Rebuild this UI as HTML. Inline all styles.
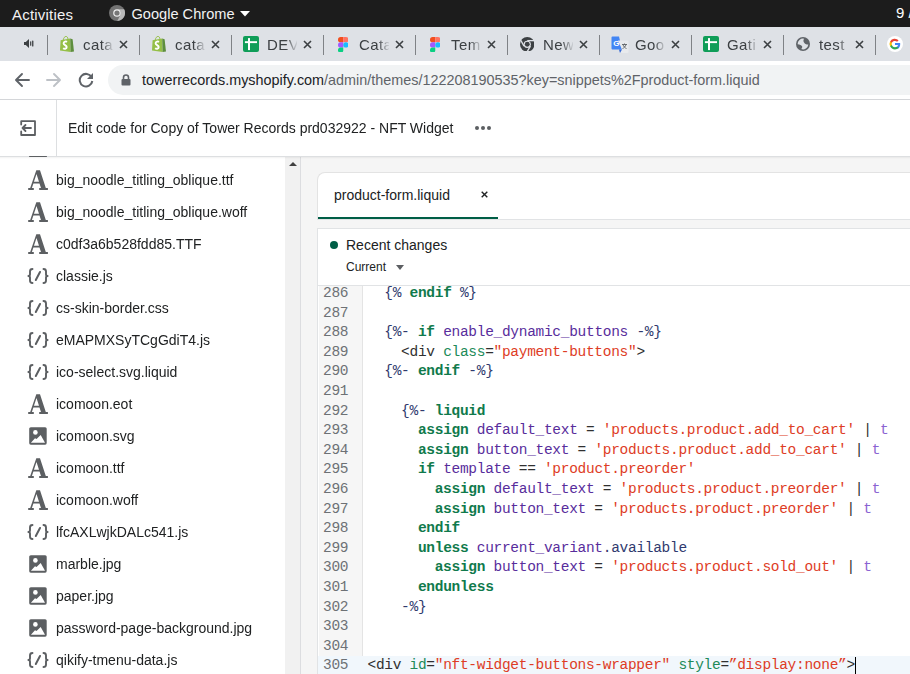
<!DOCTYPE html>
<html><head><meta charset="utf-8">
<style>
*{box-sizing:border-box;margin:0;padding:0}
html,body{width:910px;height:674px;overflow:hidden;background:#fff;font-family:"Liberation Sans",sans-serif}
.abs{position:absolute}
#topbar{left:0;top:0;width:910px;height:27px;background:#1c1c1c;color:#fff}
#tabs{left:0;top:27px;width:910px;height:34px;background:#dee1e6}
#toolbar{left:0;top:61px;width:910px;height:39px;background:#fff;border-bottom:1px solid #d4d6d9}
#omni{left:108px;top:65px;width:820px;height:30px;border-radius:15px;background:#f1f3f4}
#shead{left:0;top:100px;width:910px;height:57px;background:#fff;border-bottom:1px solid #dddfe1}
#sidebar{left:0;top:157px;width:285px;height:517px;background:#fff;overflow:hidden;will-change:transform}
#scroll{left:285px;top:157px;width:16px;height:517px;background:#f1f1f1;border-right:1px solid #dcdde0}
#main{left:301px;top:157px;width:609px;height:517px;background:#f5f5f5}
.tabt{font-size:15px;letter-spacing:0.4px;color:#3c4043;white-space:nowrap;width:30px;height:20px;overflow:hidden;-webkit-mask-image:linear-gradient(90deg,#000 62%,rgba(0,0,0,0.1) 100%)}
.sbt{font-size:14px;color:#202223;white-space:nowrap}
.item{position:absolute;left:0;height:32px;width:285px;font-size:14px;color:#202223}
.item span{position:absolute;left:56px;top:15px;line-height:0}
.sep{position:absolute;top:34.5px;width:1px;height:20px;background:#7f8286}
.tab{position:absolute;top:27px;height:34px;width:92px}
.tab .t{position:absolute;left:36px;top:8px;font-size:15px;color:#45484c;white-space:nowrap;width:33px;overflow:hidden}
.tab .x{position:absolute;left:71px;top:12px;width:10px;height:10px}
.code{font-family:"Liberation Mono",monospace;font-size:14.5px;letter-spacing:-0.3px;line-height:19.6px;white-space:pre}
.ln{position:absolute;left:318px;width:45px;height:19.6px;color:#6d7175;padding-left:5px}
.cl{position:absolute;left:367.5px;height:19.6px;color:#303030}
.k{color:#107a4c;font-weight:bold}
.d{color:#303a6e}
.v{color:#582d9c}
.s{color:#de3c25}
.f{color:#8a63d2}
.a{color:#218a58}
</style></head><body>
<!-- Ubuntu top bar -->
<div id="topbar" class="abs">
  <div class="abs" style="left:12px;top:5.5px;font-size:15px;letter-spacing:0.2px;color:#f2f2f2">Activities</div>
  <svg class="abs" style="left:109px;top:5px" width="16" height="16" viewBox="0 0 16 16"><circle cx="8" cy="8" r="8" fill="#737373"/><path d="M8 4.2H15.1A8 8 0 0 1 8.3 16L11.3 9.9A3.8 3.8 0 0 0 8 4.2Z" fill="#b8b8b8"/><circle cx="8" cy="8" r="3.8" fill="#f0f0f0"/><circle cx="8" cy="8" r="2.6" fill="#777"/></svg>
  <div class="abs" style="left:131.5px;top:5.5px;font-size:14.6px;color:#f2f2f2;white-space:nowrap">Google Chrome</div>
  <svg class="abs" style="left:240px;top:11px" width="10" height="5.5"><path d="M0 0H10L5 5.5Z" fill="#fff"/></svg>
  <div class="abs" style="left:896px;top:4px;font-size:15px;white-space:nowrap">9 /</div>
</div>
<!-- tab strip -->
<div id="tabs" class="abs"></div>
<svg class="abs" style="left:23px;top:38px" width="11" height="11" viewBox="0 0 11 11"><path d="M1 4H2.8L6 1V10L2.8 7H1Z" fill="#3c4043"/><rect x="7.1" y="3.2" width="1.2" height="4.6" rx=".6" fill="#3c4043"/><rect x="9.1" y="2.5" width="1.3" height="6" rx=".6" fill="#3c4043"/></svg>
<div class="sep" style="left:47px"></div>
<div class="abs" style="left:60.0px;top:36.0px;width:14px;height:16px;line-height:0"><svg width="14" height="16" viewBox="0 0 14 16"><path d="M0.6 4.3L10.2 2.4 10.6 16 0 14.6Z" fill="#95bf47"/><path d="M10.2 2.4L12.6 3.2 14 15.6 10.6 16Z" fill="#5e8e3e"/><path d="M3.2 4C3.6 1.8 4.8 0.4 6 0.4 7.2 0.4 7.8 1.6 8 3.2" stroke="#95bf47" stroke-width="1" fill="none"/><path d="M7 5.9C6.1 5.3 3.6 5.2 3.6 7.3 3.6 9.2 6.7 9 6.7 11.1 6.7 13.1 4.2 13 3.1 12.3" stroke="#fff" stroke-width="1.9" fill="none"/></svg></div>
<div class="abs tabt" style="left:83px;top:35.5px">cata</div>
<svg class="abs" style="left:119px;top:40px" width="9" height="9" viewBox="0 0 9 9"><path d="M1 1l7 7M8 1l-7 7" stroke="#3c4043" stroke-width="1.6"/></svg>
<div class="sep" style="left:139px"></div>
<div class="abs" style="left:152.0px;top:36.0px;width:14px;height:16px;line-height:0"><svg width="14" height="16" viewBox="0 0 14 16"><path d="M0.6 4.3L10.2 2.4 10.6 16 0 14.6Z" fill="#95bf47"/><path d="M10.2 2.4L12.6 3.2 14 15.6 10.6 16Z" fill="#5e8e3e"/><path d="M3.2 4C3.6 1.8 4.8 0.4 6 0.4 7.2 0.4 7.8 1.6 8 3.2" stroke="#95bf47" stroke-width="1" fill="none"/><path d="M7 5.9C6.1 5.3 3.6 5.2 3.6 7.3 3.6 9.2 6.7 9 6.7 11.1 6.7 13.1 4.2 13 3.1 12.3" stroke="#fff" stroke-width="1.9" fill="none"/></svg></div>
<div class="abs tabt" style="left:175px;top:35.5px">cata</div>
<svg class="abs" style="left:211px;top:40px" width="9" height="9" viewBox="0 0 9 9"><path d="M1 1l7 7M8 1l-7 7" stroke="#3c4043" stroke-width="1.6"/></svg>
<div class="sep" style="left:231px"></div>
<div class="abs" style="left:243.0px;top:36.0px;width:16px;height:16px;line-height:0"><svg width="16" height="16" viewBox="0 0 16 16"><rect x="0" y="0" width="16" height="16" rx="2" fill="#0f9d58"/><rect x="1.9" y="5.2" width="12.1" height="1.9" fill="#fff"/><rect x="5" y="2.1" width="2" height="12" fill="#fff"/></svg></div>
<div class="abs tabt" style="left:267px;top:35.5px">DEV</div>
<svg class="abs" style="left:303px;top:40px" width="9" height="9" viewBox="0 0 9 9"><path d="M1 1l7 7M8 1l-7 7" stroke="#3c4043" stroke-width="1.6"/></svg>
<div class="sep" style="left:323px"></div>
<div class="abs" style="left:337.75px;top:36.625px;width:10.5px;height:15.75px;line-height:0"><svg width="10.5" height="15.75" viewBox="0 0 12 18"><path d="M6 0H3a3 3 0 0 0 0 6h3z" fill="#f24e1e"/><path d="M6 0h3a3 3 0 0 1 0 6H6z" fill="#ff7262"/><path d="M6 6H3a3 3 0 0 0 0 6h3z" fill="#a259ff"/><circle cx="9" cy="9" r="3" fill="#1abcfe"/><path d="M6 12H3a3 3 0 1 0 3 3z" fill="#0acf83"/></svg></div>
<div class="abs tabt" style="left:359px;top:35.5px">Cata</div>
<svg class="abs" style="left:395px;top:40px" width="9" height="9" viewBox="0 0 9 9"><path d="M1 1l7 7M8 1l-7 7" stroke="#3c4043" stroke-width="1.6"/></svg>
<div class="sep" style="left:415px"></div>
<div class="abs" style="left:429.75px;top:36.625px;width:10.5px;height:15.75px;line-height:0"><svg width="10.5" height="15.75" viewBox="0 0 12 18"><path d="M6 0H3a3 3 0 0 0 0 6h3z" fill="#f24e1e"/><path d="M6 0h3a3 3 0 0 1 0 6H6z" fill="#ff7262"/><path d="M6 6H3a3 3 0 0 0 0 6h3z" fill="#a259ff"/><circle cx="9" cy="9" r="3" fill="#1abcfe"/><path d="M6 12H3a3 3 0 1 0 3 3z" fill="#0acf83"/></svg></div>
<div class="abs tabt" style="left:451px;top:35.5px">Tem</div>
<svg class="abs" style="left:487px;top:40px" width="9" height="9" viewBox="0 0 9 9"><path d="M1 1l7 7M8 1l-7 7" stroke="#3c4043" stroke-width="1.6"/></svg>
<div class="sep" style="left:507px"></div>
<div class="abs" style="left:519.75px;top:36.75px;width:14.5px;height:14.5px;line-height:0"><svg width="14.5" height="14.5" viewBox="0 0 16 16"><circle cx="8" cy="8" r="8" fill="#3c4043"/><circle cx="8" cy="8" r="4" fill="#dee1e6"/><circle cx="8" cy="8" r="2.7" fill="#3c4043"/><path d="M8 4H15.5" stroke="#dee1e6" stroke-width="1.5"/><path d="M4.5 10L0.8 3.6" stroke="#dee1e6" stroke-width="1.5"/><path d="M11.5 10L7.7 16.5" stroke="#dee1e6" stroke-width="1.5"/></svg></div>
<div class="abs tabt" style="left:543px;top:35.5px">New</div>
<svg class="abs" style="left:579px;top:40px" width="9" height="9" viewBox="0 0 9 9"><path d="M1 1l7 7M8 1l-7 7" stroke="#3c4043" stroke-width="1.6"/></svg>
<div class="sep" style="left:599px"></div>
<div class="abs" style="left:610.8px;top:35.8px;width:18px;height:18px;line-height:0"><svg width="18" height="18" viewBox="0 0 18 18"><path d="M0.5 1.5A1 1 0 0 1 1.5 .5H8l3 13H1.5a1 1 0 0 1-1-1z" fill="#4285f4"/><path d="M7 4.5h9.5a1 1 0 0 1 1 1V16a1 1 0 0 1-1 1H9l2-3.5z" fill="#e8eaed"/><path d="M8 13.5l3 0-2 3.5z" fill="#3367d6"/><text x="2.3" y="10" font-family="Liberation Sans" font-weight="bold" font-size="8" fill="#fff">G</text><path d="M11 8.5h5M13.5 7.5v1M12 8.5c.5 2 2 3.5 3.5 4M15 8.5c-.5 2-2 3.5-3.5 4" stroke="#5f6368" stroke-width=".9" fill="none"/></svg></div>
<div class="abs tabt" style="left:635px;top:35.5px">Goo</div>
<svg class="abs" style="left:671px;top:40px" width="9" height="9" viewBox="0 0 9 9"><path d="M1 1l7 7M8 1l-7 7" stroke="#3c4043" stroke-width="1.6"/></svg>
<div class="sep" style="left:691px"></div>
<div class="abs" style="left:703.0px;top:36.0px;width:16px;height:16px;line-height:0"><svg width="16" height="16" viewBox="0 0 16 16"><rect x="0" y="0" width="16" height="16" rx="2" fill="#0f9d58"/><rect x="1.9" y="5.2" width="12.1" height="1.9" fill="#fff"/><rect x="5" y="2.1" width="2" height="12" fill="#fff"/></svg></div>
<div class="abs tabt" style="left:727px;top:35.5px">Gati</div>
<svg class="abs" style="left:763px;top:40px" width="9" height="9" viewBox="0 0 9 9"><path d="M1 1l7 7M8 1l-7 7" stroke="#3c4043" stroke-width="1.6"/></svg>
<div class="sep" style="left:783px"></div>
<div class="abs" style="left:796.0px;top:37.0px;width:14px;height:14px;line-height:0"><svg width="14" height="14" viewBox="0 0 16 16"><circle cx="8" cy="8" r="8" fill="#5f6368"/><path d="M1.9 8.3A6.1 6.1 0 0 1 9.2 1.95C8.4 3.2 8.2 4.6 9 5.9 9.8 7.5 11.5 8.6 14.1 8.7A6.1 6.1 0 0 1 6 13.8C7 12.8 7.5 11.6 6.9 10.6 6.2 9.3 4.3 8.6 1.9 8.3Z" fill="#dee1e6"/></svg></div>
<div class="abs tabt" style="left:819px;top:35.5px">test</div>
<svg class="abs" style="left:855px;top:40px" width="9" height="9" viewBox="0 0 9 9"><path d="M1 1l7 7M8 1l-7 7" stroke="#3c4043" stroke-width="1.6"/></svg>
<div class="sep" style="left:875px"></div>
<div class="abs" style="left:887.0px;top:36.0px;width:16px;height:16px;line-height:0"><svg width="16" height="16" viewBox="0 0 16 16"><circle cx="8" cy="8" r="8" fill="#fff"/><path d="M13.2 8.1c0-.4 0-.8-.1-1.1H8v2.1h3a2.6 2.6 0 0 1-1.1 1.7v1.4h1.8c1-1 1.5-2.4 1.5-4.1z" fill="#4285f4"/><path d="M8 13.4c1.5 0 2.8-.5 3.7-1.3l-1.8-1.4c-.5.3-1.1.5-1.9.5-1.4 0-2.6-1-3.1-2.3H3.1v1.4A5.4 5.4 0 0 0 8 13.4z" fill="#34a853"/><path d="M4.9 8.9a3.2 3.2 0 0 1 0-2.1V5.4H3.1a5.4 5.4 0 0 0 0 4.9z" fill="#fbbc05"/><path d="M8 4.9c.8 0 1.5.3 2.1.8l1.5-1.5A5.4 5.4 0 0 0 3.1 5.4l1.8 1.4C5.4 5.5 6.6 4.9 8 4.9z" fill="#ea4335"/></svg></div>
<!-- toolbar -->
<div id="toolbar" class="abs"></div>
<svg class="abs" style="left:14px;top:72px" width="16" height="16" viewBox="0 0 16 16"><path d="M15 8H2.5M8 2L2 8l6 6" stroke="#5f6368" stroke-width="1.9" fill="none" stroke-linecap="round" stroke-linejoin="round"/></svg>
<svg class="abs" style="left:46px;top:72px" width="16" height="16" viewBox="0 0 16 16"><path d="M1 8h12.5M8 2l6 6-6 6" stroke="#bdc1c6" stroke-width="1.9" fill="none" stroke-linecap="round" stroke-linejoin="round"/></svg>
<svg class="abs" style="left:78px;top:72px" width="16" height="16" viewBox="0 0 16 16"><path d="M13.6 5.2A6.3 6.3 0 1 0 14.3 9" stroke="#5f6368" stroke-width="2" fill="none"/><path d="M15 1v6H9z" fill="#5f6368"/></svg>
<div id="omni" class="abs"></div>
<svg class="abs" style="left:121px;top:74px" width="10" height="12" viewBox="0 0 10 12"><path d="M2.5 5V3.5a2.5 2.5 0 0 1 5 0V5" stroke="#5f6368" stroke-width="1.6" fill="none"/><rect x="0.5" y="5" width="9" height="6.5" rx="1" fill="#5f6368"/></svg>
<div class="abs" style="left:142px;top:72px;font-size:14.4px;color:#202124;white-space:nowrap">towerrecords.myshopify.com<span style="color:#5f6368">/admin/themes/122208190535?key=snippets%2Fproduct-form.liquid</span></div>
<!-- shopify header -->
<div id="shead" class="abs"></div>
<div class="abs" style="left:56px;top:100px;width:1px;height:56px;background:#dddfe1"></div>
<svg class="abs" style="left:19px;top:119px" width="18" height="18" viewBox="0 0 18 18"><path d="M2.2 5.5V2.2H16V16H2.2V12.5" stroke="#5c5f62" stroke-width="1.8" fill="none" stroke-linejoin="round" stroke-linecap="round"/><path d="M12 9H3.5M6.5 6L3.5 9 6.5 12" stroke="#5c5f62" stroke-width="1.8" fill="none" stroke-linecap="round" stroke-linejoin="round"/></svg>
<div class="abs" style="left:68px;top:120px;font-size:14px;color:#202223;white-space:nowrap;will-change:transform">Edit code for Copy of Tower Records prd032922 - NFT Widget</div>
<div class="abs" style="left:475px;top:126px;width:18px;height:4px">
  <div class="abs" style="left:0;top:0;width:4px;height:4px;border-radius:2px;background:#5c5f62"></div>
  <div class="abs" style="left:6px;top:0;width:4px;height:4px;border-radius:2px;background:#5c5f62"></div>
  <div class="abs" style="left:12px;top:0;width:4px;height:4px;border-radius:2px;background:#5c5f62"></div>
</div>
<!-- sidebar -->
<div class="abs" style="left:29px;top:155.5px;width:17.5px;height:1.5px;background:#5c5f62;border-radius:1px;z-index:6"></div>
<div class="abs" style="left:0;top:157px;width:910px;height:2px;background:linear-gradient(rgba(0,0,0,.05),rgba(0,0,0,0));z-index:5"></div>
<div id="sidebar" class="abs"><div class="abs" style="left:24px;top:9px;width:28px;height:28px;line-height:0"><svg width="28" height="28" viewBox="0 0 28 28"><path fill-rule="evenodd" d="M12.3 4.2H16L21.8 22H23.9V23.9H15.2V22H17L15.5 17.5H9.4L7.9 22H9.8V23.9H4.2V22H6.2ZM12.5 7.9L15 15.8H9.95Z" fill="#5c5f62"/></svg></div>
<div class="abs sbt" style="left:56px;top:14.5px">big_noodle_titling_oblique.ttf</div>
<div class="abs" style="left:24px;top:41px;width:28px;height:28px;line-height:0"><svg width="28" height="28" viewBox="0 0 28 28"><path fill-rule="evenodd" d="M12.3 4.2H16L21.8 22H23.9V23.9H15.2V22H17L15.5 17.5H9.4L7.9 22H9.8V23.9H4.2V22H6.2ZM12.5 7.9L15 15.8H9.95Z" fill="#5c5f62"/></svg></div>
<div class="abs sbt" style="left:56px;top:46.5px">big_noodle_titling_oblique.woff</div>
<div class="abs" style="left:24px;top:73px;width:28px;height:28px;line-height:0"><svg width="28" height="28" viewBox="0 0 28 28"><path fill-rule="evenodd" d="M12.3 4.2H16L21.8 22H23.9V23.9H15.2V22H17L15.5 17.5H9.4L7.9 22H9.8V23.9H4.2V22H6.2ZM12.5 7.9L15 15.8H9.95Z" fill="#5c5f62"/></svg></div>
<div class="abs sbt" style="left:56px;top:78.5px">c0df3a6b528fdd85.TTF</div>
<div class="abs" style="left:24px;top:105px;width:28px;height:28px;line-height:0"><svg width="28" height="28" viewBox="0 0 28 28"><path d="M8.5 7C6.6 7 6 8 6 9.5V12.3C6 13.4 5.5 14 4.4 14C5.5 14 6 14.6 6 15.7V18.5C6 20 6.6 21 8.5 21M4.4 14H5.6M19.5 7C21.4 7 22 8 22 9.5V12.3C22 13.4 22.5 14 23.6 14C22.5 14 22 14.6 22 15.7V18.5C22 20 21.4 21 19.5 21M23.6 14H22.4" stroke="#5c5f62" stroke-width="1.9" fill="none" stroke-linecap="round" stroke-linejoin="round"/><path d="M16 10L11.8 18" stroke="#5c5f62" stroke-width="2" stroke-linecap="round"/></svg></div>
<div class="abs sbt" style="left:56px;top:110.5px">classie.js</div>
<div class="abs" style="left:24px;top:137px;width:28px;height:28px;line-height:0"><svg width="28" height="28" viewBox="0 0 28 28"><path d="M8.5 7C6.6 7 6 8 6 9.5V12.3C6 13.4 5.5 14 4.4 14C5.5 14 6 14.6 6 15.7V18.5C6 20 6.6 21 8.5 21M4.4 14H5.6M19.5 7C21.4 7 22 8 22 9.5V12.3C22 13.4 22.5 14 23.6 14C22.5 14 22 14.6 22 15.7V18.5C22 20 21.4 21 19.5 21M23.6 14H22.4" stroke="#5c5f62" stroke-width="1.9" fill="none" stroke-linecap="round" stroke-linejoin="round"/><path d="M16 10L11.8 18" stroke="#5c5f62" stroke-width="2" stroke-linecap="round"/></svg></div>
<div class="abs sbt" style="left:56px;top:142.5px">cs-skin-border.css</div>
<div class="abs" style="left:24px;top:169px;width:28px;height:28px;line-height:0"><svg width="28" height="28" viewBox="0 0 28 28"><path d="M8.5 7C6.6 7 6 8 6 9.5V12.3C6 13.4 5.5 14 4.4 14C5.5 14 6 14.6 6 15.7V18.5C6 20 6.6 21 8.5 21M4.4 14H5.6M19.5 7C21.4 7 22 8 22 9.5V12.3C22 13.4 22.5 14 23.6 14C22.5 14 22 14.6 22 15.7V18.5C22 20 21.4 21 19.5 21M23.6 14H22.4" stroke="#5c5f62" stroke-width="1.9" fill="none" stroke-linecap="round" stroke-linejoin="round"/><path d="M16 10L11.8 18" stroke="#5c5f62" stroke-width="2" stroke-linecap="round"/></svg></div>
<div class="abs sbt" style="left:56px;top:174.5px">eMAPMXSyTCgGdiT4.js</div>
<div class="abs" style="left:24px;top:201px;width:28px;height:28px;line-height:0"><svg width="28" height="28" viewBox="0 0 28 28"><path d="M8.5 7C6.6 7 6 8 6 9.5V12.3C6 13.4 5.5 14 4.4 14C5.5 14 6 14.6 6 15.7V18.5C6 20 6.6 21 8.5 21M4.4 14H5.6M19.5 7C21.4 7 22 8 22 9.5V12.3C22 13.4 22.5 14 23.6 14C22.5 14 22 14.6 22 15.7V18.5C22 20 21.4 21 19.5 21M23.6 14H22.4" stroke="#5c5f62" stroke-width="1.9" fill="none" stroke-linecap="round" stroke-linejoin="round"/><path d="M16 10L11.8 18" stroke="#5c5f62" stroke-width="2" stroke-linecap="round"/></svg></div>
<div class="abs sbt" style="left:56px;top:206.5px">ico-select.svg.liquid</div>
<div class="abs" style="left:24px;top:233px;width:28px;height:28px;line-height:0"><svg width="28" height="28" viewBox="0 0 28 28"><path fill-rule="evenodd" d="M12.3 4.2H16L21.8 22H23.9V23.9H15.2V22H17L15.5 17.5H9.4L7.9 22H9.8V23.9H4.2V22H6.2ZM12.5 7.9L15 15.8H9.95Z" fill="#5c5f62"/></svg></div>
<div class="abs sbt" style="left:56px;top:238.5px">icomoon.eot</div>
<div class="abs" style="left:24px;top:265px;width:28px;height:28px;line-height:0"><svg width="28" height="28" viewBox="0 0 28 28"><rect x="5.2" y="5.2" width="17.5" height="17.5" rx="1.6" fill="#5c5f62"/><circle cx="11.4" cy="10.4" r="2.3" fill="#fff"/><path d="M6.9 20.8L11 16.3 12.5 17.1 16.7 12.9 21 20.8Z" fill="#fff"/></svg></div>
<div class="abs sbt" style="left:56px;top:270.5px">icomoon.svg</div>
<div class="abs" style="left:24px;top:297px;width:28px;height:28px;line-height:0"><svg width="28" height="28" viewBox="0 0 28 28"><path fill-rule="evenodd" d="M12.3 4.2H16L21.8 22H23.9V23.9H15.2V22H17L15.5 17.5H9.4L7.9 22H9.8V23.9H4.2V22H6.2ZM12.5 7.9L15 15.8H9.95Z" fill="#5c5f62"/></svg></div>
<div class="abs sbt" style="left:56px;top:302.5px">icomoon.ttf</div>
<div class="abs" style="left:24px;top:329px;width:28px;height:28px;line-height:0"><svg width="28" height="28" viewBox="0 0 28 28"><path fill-rule="evenodd" d="M12.3 4.2H16L21.8 22H23.9V23.9H15.2V22H17L15.5 17.5H9.4L7.9 22H9.8V23.9H4.2V22H6.2ZM12.5 7.9L15 15.8H9.95Z" fill="#5c5f62"/></svg></div>
<div class="abs sbt" style="left:56px;top:334.5px">icomoon.woff</div>
<div class="abs" style="left:24px;top:361px;width:28px;height:28px;line-height:0"><svg width="28" height="28" viewBox="0 0 28 28"><path d="M8.5 7C6.6 7 6 8 6 9.5V12.3C6 13.4 5.5 14 4.4 14C5.5 14 6 14.6 6 15.7V18.5C6 20 6.6 21 8.5 21M4.4 14H5.6M19.5 7C21.4 7 22 8 22 9.5V12.3C22 13.4 22.5 14 23.6 14C22.5 14 22 14.6 22 15.7V18.5C22 20 21.4 21 19.5 21M23.6 14H22.4" stroke="#5c5f62" stroke-width="1.9" fill="none" stroke-linecap="round" stroke-linejoin="round"/><path d="M16 10L11.8 18" stroke="#5c5f62" stroke-width="2" stroke-linecap="round"/></svg></div>
<div class="abs sbt" style="left:56px;top:366.5px">lfcAXLwjkDALc541.js</div>
<div class="abs" style="left:24px;top:393px;width:28px;height:28px;line-height:0"><svg width="28" height="28" viewBox="0 0 28 28"><rect x="5.2" y="5.2" width="17.5" height="17.5" rx="1.6" fill="#5c5f62"/><circle cx="11.4" cy="10.4" r="2.3" fill="#fff"/><path d="M6.9 20.8L11 16.3 12.5 17.1 16.7 12.9 21 20.8Z" fill="#fff"/></svg></div>
<div class="abs sbt" style="left:56px;top:398.5px">marble.jpg</div>
<div class="abs" style="left:24px;top:425px;width:28px;height:28px;line-height:0"><svg width="28" height="28" viewBox="0 0 28 28"><rect x="5.2" y="5.2" width="17.5" height="17.5" rx="1.6" fill="#5c5f62"/><circle cx="11.4" cy="10.4" r="2.3" fill="#fff"/><path d="M6.9 20.8L11 16.3 12.5 17.1 16.7 12.9 21 20.8Z" fill="#fff"/></svg></div>
<div class="abs sbt" style="left:56px;top:430.5px">paper.jpg</div>
<div class="abs" style="left:24px;top:457px;width:28px;height:28px;line-height:0"><svg width="28" height="28" viewBox="0 0 28 28"><rect x="5.2" y="5.2" width="17.5" height="17.5" rx="1.6" fill="#5c5f62"/><circle cx="11.4" cy="10.4" r="2.3" fill="#fff"/><path d="M6.9 20.8L11 16.3 12.5 17.1 16.7 12.9 21 20.8Z" fill="#fff"/></svg></div>
<div class="abs sbt" style="left:56px;top:462.5px">password-page-background.jpg</div>
<div class="abs" style="left:24px;top:489px;width:28px;height:28px;line-height:0"><svg width="28" height="28" viewBox="0 0 28 28"><path d="M8.5 7C6.6 7 6 8 6 9.5V12.3C6 13.4 5.5 14 4.4 14C5.5 14 6 14.6 6 15.7V18.5C6 20 6.6 21 8.5 21M4.4 14H5.6M19.5 7C21.4 7 22 8 22 9.5V12.3C22 13.4 22.5 14 23.6 14C22.5 14 22 14.6 22 15.7V18.5C22 20 21.4 21 19.5 21M23.6 14H22.4" stroke="#5c5f62" stroke-width="1.9" fill="none" stroke-linecap="round" stroke-linejoin="round"/><path d="M16 10L11.8 18" stroke="#5c5f62" stroke-width="2" stroke-linecap="round"/></svg></div>
<div class="abs sbt" style="left:56px;top:494.5px">qikify-tmenu-data.js</div></div>
<div id="scroll" class="abs"></div>
<svg class="abs" style="left:289px;top:162px" width="8" height="4"><path d="M0 4H8L4 0Z" fill="#404040"/></svg>
<!-- main -->
<div id="main" class="abs"></div>
<!-- tab card -->
<div class="abs" style="left:317px;top:172px;width:600px;height:48px;background:#fff;border-radius:8px 0 0 0;border-top:1px solid #e3e3e3;border-left:1px solid #e3e3e3;border-bottom:1px solid #e1e3e5"></div>
<div class="abs" style="left:334px;top:187px;font-size:14px;color:#202223;white-space:nowrap">product-form.liquid</div>
<svg class="abs" style="left:480.5px;top:191.3px" width="7" height="7" viewBox="0 0 7 7"><path d="M.7 .7l5.6 5.6M6.3 .7L.7 6.3" stroke="#202223" stroke-width="1.4"/></svg>
<div class="abs" style="left:318px;top:217px;width:180px;height:2px;background:#005e46"></div>
<!-- recent changes card -->
<div class="abs" style="left:317px;top:228px;width:600px;height:460px;background:#fff;border-top:1px solid #e1e3e5;border-left:1px solid #e1e3e5"></div>
<div class="abs" style="left:330px;top:241px;width:8px;height:8px;border-radius:4px;background:#005e46"></div>
<div class="abs" style="left:346px;top:237px;font-size:14px;color:#202223;white-space:nowrap">Recent changes</div>
<div class="abs" style="left:346px;top:260px;font-size:12px;color:#202223;white-space:nowrap">Current</div>
<svg class="abs" style="left:396px;top:265px" width="8" height="5"><path d="M0 0H8L4 5Z" fill="#5c5f62"/></svg>
<div class="abs" style="left:318px;top:285px;width:600px;height:1px;background:#e1e3e5"></div>
<div class="abs" style="left:319px;top:286px;width:43px;height:400px;background:#f6f6f6"></div>
<div class="abs" style="left:362px;top:286px;width:1px;height:400px;background:#e4e4e4"></div>
<div class="code ln" style="top:284.00px">286</div>
<div class="code cl" style="top:284.00px">  <span class="d">{%</span> <span class="k">endif</span> <span class="d">%}</span></div>
<div class="code ln" style="top:303.60px">287</div>
<div class="code cl" style="top:303.60px"></div>
<div class="code ln" style="top:323.20px">288</div>
<div class="code cl" style="top:323.20px">  <span class="d">{%-</span> <span class="k">if</span> <span class="v">enable_dynamic_buttons</span> <span class="d">-%}</span></div>
<div class="code ln" style="top:342.80px">289</div>
<div class="code cl" style="top:342.80px">    &lt;div <span class="a">class</span>=<span class="s">&quot;payment-buttons&quot;</span>&gt;</div>
<div class="code ln" style="top:362.40px">290</div>
<div class="code cl" style="top:362.40px">  <span class="d">{%-</span> <span class="k">endif</span> <span class="d">-%}</span></div>
<div class="code ln" style="top:382.00px">291</div>
<div class="code cl" style="top:382.00px"></div>
<div class="code ln" style="top:401.60px">292</div>
<div class="code cl" style="top:401.60px">    <span class="d">{%-</span> <span class="k">liquid</span></div>
<div class="code ln" style="top:421.20px">293</div>
<div class="code cl" style="top:421.20px">      <span class="k">assign</span> <span class="v">default_text</span> = <span class="s">&#x27;products.product.add_to_cart&#x27;</span> | <span class="f">t</span></div>
<div class="code ln" style="top:440.80px">294</div>
<div class="code cl" style="top:440.80px">      <span class="k">assign</span> <span class="v">button_text</span> = <span class="s">&#x27;products.product.add_to_cart&#x27;</span> | <span class="f">t</span></div>
<div class="code ln" style="top:460.40px">295</div>
<div class="code cl" style="top:460.40px">      <span class="k">if</span> <span class="v">template</span> == <span class="s">&#x27;product.preorder&#x27;</span></div>
<div class="code ln" style="top:480.00px">296</div>
<div class="code cl" style="top:480.00px">        <span class="k">assign</span> <span class="v">default_text</span> = <span class="s">&#x27;products.product.preorder&#x27;</span> | <span class="f">t</span></div>
<div class="code ln" style="top:499.60px">297</div>
<div class="code cl" style="top:499.60px">        <span class="k">assign</span> <span class="v">button_text</span> = <span class="s">&#x27;products.product.preorder&#x27;</span> | <span class="f">t</span></div>
<div class="code ln" style="top:519.20px">298</div>
<div class="code cl" style="top:519.20px">      <span class="k">endif</span></div>
<div class="code ln" style="top:538.80px">299</div>
<div class="code cl" style="top:538.80px">      <span class="k">unless</span> <span class="v">current_variant</span><span class="d">.available</span></div>
<div class="code ln" style="top:558.40px">300</div>
<div class="code cl" style="top:558.40px">        <span class="k">assign</span> <span class="v">button_text</span> = <span class="s">&#x27;products.product.sold_out&#x27;</span> | <span class="f">t</span></div>
<div class="code ln" style="top:578.00px">301</div>
<div class="code cl" style="top:578.00px">      <span class="k">endunless</span></div>
<div class="code ln" style="top:597.60px">302</div>
<div class="code cl" style="top:597.60px">    <span class="d">-%}</span></div>
<div class="code ln" style="top:617.20px">303</div>
<div class="code cl" style="top:617.20px"></div>
<div class="code ln" style="top:636.80px">304</div>
<div class="code cl" style="top:636.80px"></div>
<div class="abs" style="left:318px;top:655.5px;width:592px;height:20px;background:#f1f7fc"></div>
<div class="code ln" style="top:656.40px">305</div>
<div class="code cl" style="top:656.40px">&lt;div <span class="a">id</span>=<span class="s">&quot;nft-widget-buttons-wrapper&quot;</span> <span class="a">style</span>=<span class="s">”display:none”</span>&gt;</div>
<div class="abs" style="left:855px;top:657px;width:1.2px;height:17px;background:#000"></div>
</body></html>
